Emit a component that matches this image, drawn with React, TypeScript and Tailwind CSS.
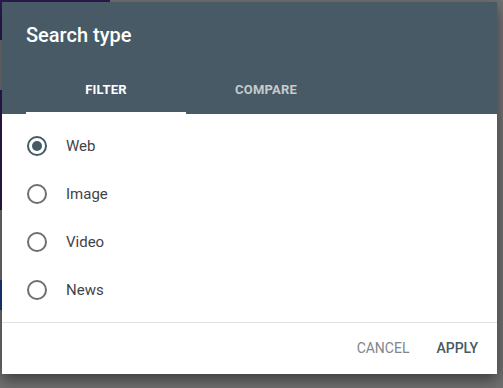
import React from "react";

const options = ["Web", "Image", "Video", "News"];

export default function App() {
  return (
    <div
      className="relative w-[503px] h-[388px] overflow-hidden bg-[#707070]"
      style={{ fontFamily: "Roboto, 'Liberation Sans', sans-serif" }}
    >
      {/* page content visible behind the scrim */}
      <div className="absolute left-0 top-0 w-[110px] h-[40px] bg-[#2c1b4f]" />
      <div className="absolute left-0 top-[90px] w-[4px] h-[120px] bg-[#2c1b4f]" />
      <div className="absolute left-0 top-[280px] w-[4px] h-[30px] bg-[#1e3a7a]" />

      <div className="absolute left-[2px] top-[2px] w-[495px] bg-white shadow-[0_6px_14px_rgba(0,0,0,0.45)]">
        <div className="bg-[#475a65]">
          <div className="h-[64px] pl-[24px] pt-[19px]">
            <div className="text-[20px] leading-[28px] font-medium text-white">Search type</div>
          </div>
          <div className="flex pl-[24px] h-[48px]">
            <div className="relative w-[160px] flex items-center justify-center text-[13px] font-bold text-white tracking-[0.2px]">
              FILTER
              <div className="absolute left-0 right-0 bottom-0 h-[2px] bg-white" />
            </div>
            <div className="w-[160px] flex items-center justify-center text-[13px] font-bold text-[#c5cbcf] tracking-[0.2px]">
              COMPARE
            </div>
          </div>
        </div>
        <div className="py-[8px]">
          {options.map((o, i) => (
            <div key={o} className="flex items-center h-[48px] pl-[25px]">
              <div className="w-[20px] h-[20px] rounded-full border-2 border-[#6f6f6f] flex items-center justify-center" style={i === 0 ? { borderColor: "#455a64" } : undefined}>
                {i === 0 && <div className="w-[10px] h-[10px] rounded-full bg-[#455a64]" />}
              </div>
              <div className="ml-[19px] text-[15px] text-[#3f4448]">{o}</div>
            </div>
          ))}
        </div>
        <div className="h-px bg-[#e0e0e0]" />
        <div className="h-[51px] flex items-center justify-end gap-[27px] pr-[19px] text-[14px]">
          <span className="text-[#80868b]">CANCEL</span>
          <span className="text-[#455a64] font-medium">APPLY</span>
        </div>
      </div>
    </div>
  );
}
